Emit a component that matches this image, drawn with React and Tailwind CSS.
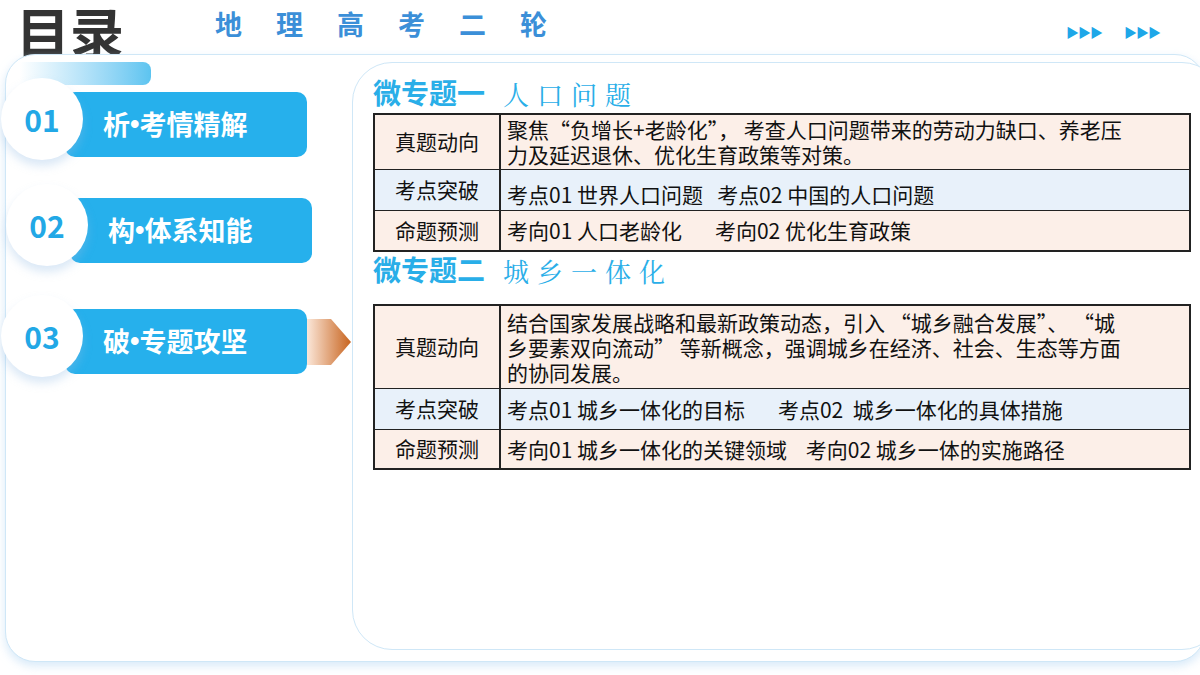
const F = { fontFamily: '"Noto Sans CJK SC", "Noto Sans", sans-serif' };
const K = { fontFamily: '"Noto Serif CJK SC", "Noto Sans CJK SC", serif' };

function Item({ n, a, b, ml, arrow }) {
  return (
    <div className="relative h-[65px] flex items-center" style={{ marginLeft: ml }}>
      <div className="absolute left-[-64px] top-[-14px] w-[82px] h-[82px] rounded-full bg-white shadow-[0_6px_10px_rgba(150,190,230,0.35)] z-10 flex items-center justify-center">
        <span className="text-[30px] font-bold text-[#22a8e6]" style={F}>{n}</span>
      </div>
      <div className="w-[242px] h-[65px] rounded-[10px] bg-[#26b0ec] flex items-center pl-[38px]">
        <span className="text-[27px] font-bold text-white flex items-center" style={F}>{a}<span style={{ fontFamily: '"Liberation Sans", sans-serif' }}>•</span>{b}</span>
      </div>
      {arrow && (
        <svg width="44" height="46" className="absolute left-[242px] top-[10px]">
          <defs><linearGradient id="g" x1="0" x2="1"><stop offset="0" stopColor="#fbe7d9" /><stop offset="1" stopColor="#c8641f" /></linearGradient></defs>
          <polygon points="0,0 24,0 44,23 24,46 0,46" fill="url(#g)" />
        </svg>
      )}
    </div>
  );
}

function Row({ h, bg, a, children }) {
  return (
    <div className={`flex border-t border-[#222] first:border-t-0 ${bg}`} style={{ height: h }}>
      <div className="w-[126px] shrink-0 border-r-2 border-[#222] flex items-center justify-center text-[21px] text-[#111]">{a}</div>
      <div className="flex-1 px-[6px] text-[21px] leading-[25px] text-[#111] flex flex-col justify-center whitespace-nowrap">{children}</div>
    </div>
  );
}

export default function App() {
  return (
    <div className="w-[1200px] h-[675px] bg-white relative overflow-hidden" style={F}>
      <div className="absolute left-[16px] top-[-4px] text-[54px] leading-[70px] font-bold text-[#333]">目录</div>
      <div className="absolute left-[215px] top-[4px] text-[27px] font-bold text-[#3b8fd8] tracking-[34px]">地理高考二轮</div>
      <div className="absolute left-[1066px] top-[22px] flex text-[#1ea7e8] text-[13px] tracking-[-1px]">
        <span>▶▶▶</span><span className="w-[22px]" /><span>▶▶▶</span>
      </div>
      <div className="absolute left-[5px] top-[54px] w-[1200px] h-[608px] rounded-[30px] border border-[#cfe7f7] shadow-[0_4px_10px_rgba(190,220,245,0.6)] bg-white" />
      <div className="absolute left-[20px] top-[62px] w-[131px] h-[23px] rounded-br-[8px] rounded-tr-[8px] bg-gradient-to-r from-white to-[#5cc4f0]" />
      <div className="absolute left-[0px] top-[92px] flex flex-col">
        <Item n="01" a="析" b="考情精解" ml={65} />
        <div className="h-[41px]" />
        <Item n="02" a="构" b="体系知能" ml={70} />
        <div className="h-[46px]" />
        <Item n="03" a="破" b="专题攻坚" ml={65} arrow />
      </div>
      <div className="absolute left-[352px] top-[62px] w-[870px] h-[588px] rounded-[40px] border border-[#cfe7f7] bg-white pl-[20px] pr-[10px] pt-[8px]">
        <div className="flex items-end h-[42px] gap-[18px]">
          <span className="text-[28px] font-bold text-[#29aee8]">微专题一</span>
          <span className="text-[26px] text-[#29aee8] tracking-[8px]" style={K}>人口问题</span>
        </div>
        <div className="w-[818px] border-2 border-[#222]">
          <Row h={54} bg="bg-[#fcefe8]" a="真题动向">
            <div>聚焦“负增长+老龄化”， 考查人口问题带来的劳动力缺口、养老压</div>
            <div>力及延迟退休、优化生育政策等对策。</div>
          </Row>
          <Row h={41} bg="bg-[#e8f1fa]" a="考点突破"><div className="pt-[8px]">考点01 世界人口问题&nbsp;&nbsp;&nbsp;考点02 中国的人口问题</div></Row>
          <Row h={40} bg="bg-[#fcefe8]" a="命题预测"><div>考向01 人口老龄化&nbsp;&nbsp;&nbsp;&nbsp;&nbsp;&nbsp;&nbsp;考向02 优化生育政策</div></Row>
        </div>
        <div className="flex items-end h-[38px] gap-[18px]">
          <span className="text-[28px] font-bold text-[#29aee8]">微专题二</span>
          <span className="text-[26px] text-[#29aee8] tracking-[8px]" style={K}>城乡一体化</span>
        </div>
        <div className="h-[14px]" />
        <div className="w-[818px] border-2 border-[#222]">
          <Row h={82} bg="bg-[#fcefe8]" a="真题动向">
            <div>结合国家发展战略和最新政策动态，引入 “城乡融合发展”、 “城</div>
            <div>乡要素双向流动” 等新概念，强调城乡在经济、社会、生态等方面</div>
            <div>的协同发展。</div>
          </Row>
          <Row h={41} bg="bg-[#e8f1fa]" a="考点突破"><div>考点01 城乡一体化的目标&nbsp;&nbsp;&nbsp;&nbsp;&nbsp;&nbsp;&nbsp;考点02&nbsp;&nbsp;城乡一体化的具体措施</div></Row>
          <Row h={39} bg="bg-[#fcefe8]" a="命题预测"><div>考向01 城乡一体化的关键领域&nbsp;&nbsp;&nbsp;&nbsp;考向02 城乡一体的实施路径</div></Row>
        </div>
      </div>
    </div>
  );
}
